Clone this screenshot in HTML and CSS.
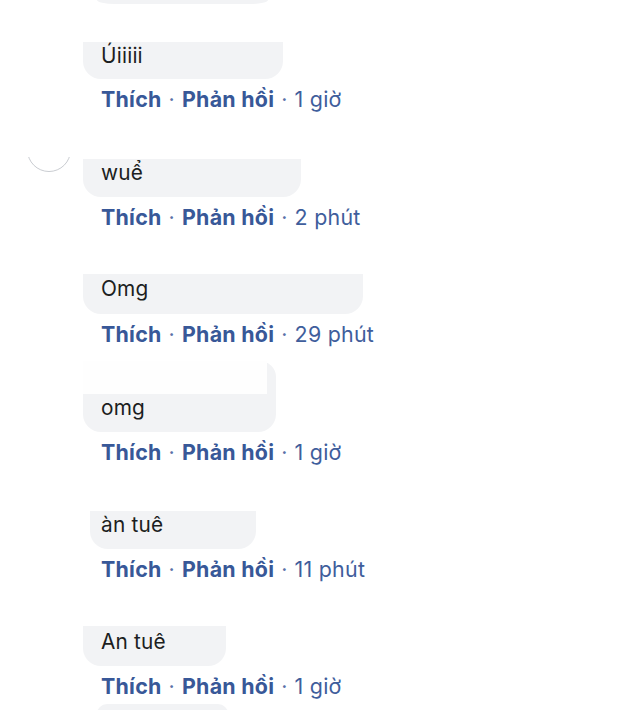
FILE: index.html
```html
<!DOCTYPE html>
<html lang="vi">
<head>
<meta charset="utf-8">
<title>Bình luận</title>
<link rel="stylesheet" href="styles.css">
</head>
<body>
<div class="feed">
  <div class="sliver"></div>

  <div class="comment c1">
    <div class="side"></div>
    <div class="body">
      <div class="bubble">Úiiiii</div>
      <div class="actions"><span class="act">Thích</span><span class="sep">·</span><span class="act">Phản hồi</span><span class="sep">·</span><span class="time">1 giờ</span></div>
    </div>
  </div>

  <div class="comment c2">
    <div class="side"><div class="avatar-clip"><div class="avatar"></div></div></div>
    <div class="body">
      <div class="bubble">wuể</div>
      <div class="actions"><span class="act">Thích</span><span class="sep">·</span><span class="act">Phản hồi</span><span class="sep">·</span><span class="time">2 phút</span></div>
    </div>
  </div>

  <div class="comment c3">
    <div class="side"></div>
    <div class="body">
      <div class="bubble">Omg</div>
      <div class="actions"><span class="act">Thích</span><span class="sep">·</span><span class="act">Phản hồi</span><span class="sep">·</span><span class="time">29 phút</span></div>
    </div>
  </div>

  <div class="comment c4">
    <div class="side"></div>
    <div class="body">
      <div class="bubble">omg</div>
      <div class="actions"><span class="act">Thích</span><span class="sep">·</span><span class="act">Phản hồi</span><span class="sep">·</span><span class="time">1 giờ</span></div>
    </div>
  </div>

  <div class="comment c5">
    <div class="side"></div>
    <div class="body">
      <div class="bubble">àn tuê</div>
      <div class="actions"><span class="act">Thích</span><span class="sep">·</span><span class="act">Phản hồi</span><span class="sep">·</span><span class="time">11 phút</span></div>
    </div>
  </div>

  <div class="comment c6">
    <div class="side"></div>
    <div class="body">
      <div class="bubble">An tuê</div>
      <div class="actions"><span class="act">Thích</span><span class="sep">·</span><span class="act">Phản hồi</span><span class="sep">·</span><span class="time">1 giờ</span></div>
    </div>
  </div>

  <div class="next-bubble"></div>
</div>
</body>
</html>
```

FILE: styles.css
```css
html, body {
  margin: 0;
  padding: 0;
  background: #ffffff;
  height: 710px;
  overflow: hidden;
}

.feed {
  font-family: Inter, "Liberation Sans", Arial, sans-serif;
  color: #1c1e21;
}

.sliver {
  margin-left: 97px;
  width: 171px;
  height: 4px;
  background: #f2f3f5;
  border-radius: 0 0 18px 18px / 0 0 4px 4px;
  margin-bottom: 38px;
}

.comment {
  display: grid;
  grid-template-columns: 83px auto;
  margin-bottom: 47.6px;
}

.body {
  display: flex;
  flex-direction: column;
  align-items: flex-start;
}

.bubble {
  position: relative;
  box-sizing: border-box;
  height: 38px;
  padding: 2px 18px 12px 18px;
  font-size: 20.8px;
  line-height: 24px;
  letter-spacing: 0.2px;
  background: #f2f3f5;
  border-radius: 0 0 18px 18px;
  white-space: nowrap;
}

.actions {
  margin-top: 8px;
  margin-left: 18px;
  font-size: 21.4px;
  line-height: 24px;
  color: #3b5998;
  white-space: nowrap;
  letter-spacing: 0.25px;
}

.act {
  font-weight: 700;
  color: #385898;
}

.sep {
  margin: 0 7px;
  color: #5b72a8;
}

.time {
  color: #3f5e9c;
}

/* per-comment bubble shapes */
.c1 .bubble { width: 200px; height: 37px; }
.c2 .bubble { width: 218px; }
.c3 .bubble { width: 280px; height: 40px; margin-top: -2px; padding-top: 3px; }
.c4 .bubble {
  width: 193px;
  height: 71px;
  margin-top: -33px;
  padding-top: 35px;
  border-radius: 0 16px 18px 18px;
}
.c4 .bubble::before {
  content: "";
  position: absolute;
  top: 0;
  left: 0;
  width: 184px;
  height: 33px;
  background: #fefefe;
}
.c5 .bubble {
  width: 166px;
  margin-left: 7px;
  padding-left: 11px;
}
.c6 .bubble { width: 143px; height: 40px; margin-top: -3px; padding-top: 4px; }
.c6 { margin-bottom: 6px; }

.avatar-clip {
  margin-left: 27px;
  margin-top: -2px;
  width: 44px;
  height: 15px;
  overflow: hidden;
}

.avatar {
  box-sizing: border-box;
  width: 44px;
  height: 44px;
  margin-top: -29px;
  border-radius: 50%;
  border: 1.5px solid #c9ccd1;
  background: #ffffff;
}

.next-bubble {
  margin-left: 97px;
  width: 131px;
  height: 10px;
  background: #f2f3f5;
  border-radius: 18px 18px 0 0;
}
```
